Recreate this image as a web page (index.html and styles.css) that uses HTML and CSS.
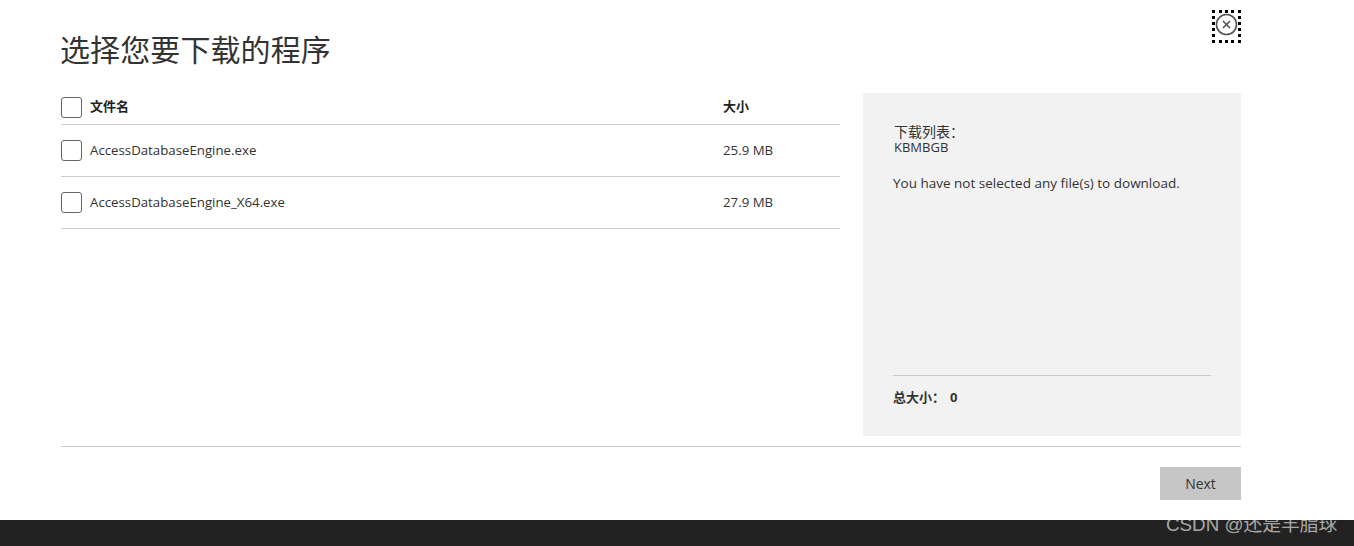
FILE: index.html
```html
<!DOCTYPE html>
<html lang="zh-CN">
<head>
<meta charset="utf-8">
<title>选择您要下载的程序</title>
<link rel="stylesheet" href="styles.css">
</head>
<body>
<main class="page">
  <div class="close-row">
    <button class="close" type="button" aria-label="Close">
      <svg width="23" height="23" viewBox="0 0 23 23" fill="none" stroke="#555" aria-hidden="true">
        <circle cx="11.5" cy="11.5" r="10" stroke-width="1.6"/>
        <path d="M8 8l7 7M15 8l-7 7" stroke-width="1.7"/>
      </svg>
    </button>
  </div>
  <h1 class="title">选择您要下载的程序</h1>
  <div class="columns">
    <section class="files">
      <div class="row head">
        <span class="box"></span>
        <span class="name">文件名</span>
        <span class="size">大小</span>
      </div>
      <div class="row">
        <span class="box"></span>
        <span class="name">AccessDatabaseEngine.exe</span>
        <span class="size">25.9 MB</span>
      </div>
      <div class="row">
        <span class="box"></span>
        <span class="name">AccessDatabaseEngine_X64.exe</span>
        <span class="size">27.9 MB</span>
      </div>
    </section>
    <aside class="panel">
      <div class="panel-top">
        <div class="panel-title">下载列表<span class="colon">：</span></div>
        <div class="panel-units">KBMBGB</div>
        <p class="panel-msg">You have not selected any file(s) to download.</p>
      </div>
      <div class="total"><span>总大小<span class="colon">：</span></span><span class="total-num">0</span></div>
    </aside>
  </div>
  <div class="actions">
    <button class="next" type="button">Next</button>
  </div>
</main>
<footer class="footer"></footer>
<div class="watermark">CSDN @还是羊脂球</div>
</body>
</html>
```
FILE: styles.css
```css
* { box-sizing: border-box; }
html, body { margin: 0; height: 546px; overflow: hidden; }
body {
  background: #fff;
  color: #333;
  font-family: "Open Sans", "Noto Sans CJK SC", sans-serif;
  font-size: 13.25px;
  display: flex;
  flex-direction: column;
}
.page {
  height: 520px;
  padding: 10px 113px 0 61px;
}
.close-row {
  display: flex;
  justify-content: flex-end;
  height: 0;
}
.close {
  width: 29px;
  height: 33px;
  padding: 0;
  background: none;
  border: 3px dotted #000;
  display: flex;
  align-items: flex-start;
  justify-content: center;
}
.title {
  margin: 0 0 0 -1px;
  padding-top: 19px;
  height: 83px;
  font-size: 30px;
  letter-spacing: 0.1px;
  line-height: 42px;
  font-weight: 400;
  color: #333;
}
.columns {
  display: flex;
  justify-content: space-between;
  height: 343px;
}
.files { width: 779px; }
.row {
  display: flex;
  align-items: center;
  height: 52px;
  padding-bottom: 2px;
  border-bottom: 1px solid #ccc;
}
.head {
  height: 32px;
  padding-bottom: 7px;
  font-size: 13px;
  font-weight: 700;
  color: #222;
}
.box {
  width: 21px;
  height: 21px;
  border: 1px solid #666;
  border-radius: 3px;
  background: #fff;
  flex: none;
}
.row:not(.head) .box { margin-bottom: -2px; }
.head .box { margin-bottom: -5px; }
.name {
  margin-left: 8px;
  width: 633px;
}
.panel {
  width: 378px;
  background: #f2f2f2;
  padding: 30px 30px 0 30px;
  display: flex;
  flex-direction: column;
}
.panel-top { flex: 1; }
.panel-title {
  font-size: 14px;
  line-height: 17px;
  padding-left: 1px;
}
.colon { font-family: "Noto Sans CJK TC", sans-serif; }
.panel-units { font-size: 13px; line-height: 14px; padding-left: 1px; }
.panel-msg {
  margin: 20px 0 0;
  font-size: 13.5px;
  line-height: 18px;
}
.total {
  height: 61px;
  border-top: 1px solid #ccc;
  padding-top: 12px;
  font-size: 13px;
  font-weight: 700;
  line-height: 18px;
  display: flex;
}
.total-num { margin-left: 5px; }
.actions {
  margin-top: 10px;
  border-top: 1px solid #ccc;
  padding-top: 20px;
  display: flex;
  justify-content: flex-end;
}
.next {
  width: 81px;
  height: 33px;
  border: 0;
  padding: 0;
  background: #c6c6c6;
  color: #333;
  font: inherit;
  font-size: 14px;
}
.footer {
  height: 26px;
  background: #222;
}
.watermark {
  position: absolute;
  left: 1166px;
  top: 512px;
  font-family: "Liberation Sans", "Noto Sans CJK SC", sans-serif;
  font-size: 18.8px;
  line-height: 26px;
  color: rgba(255,255,255,0.62);
  white-space: nowrap;
}
```
